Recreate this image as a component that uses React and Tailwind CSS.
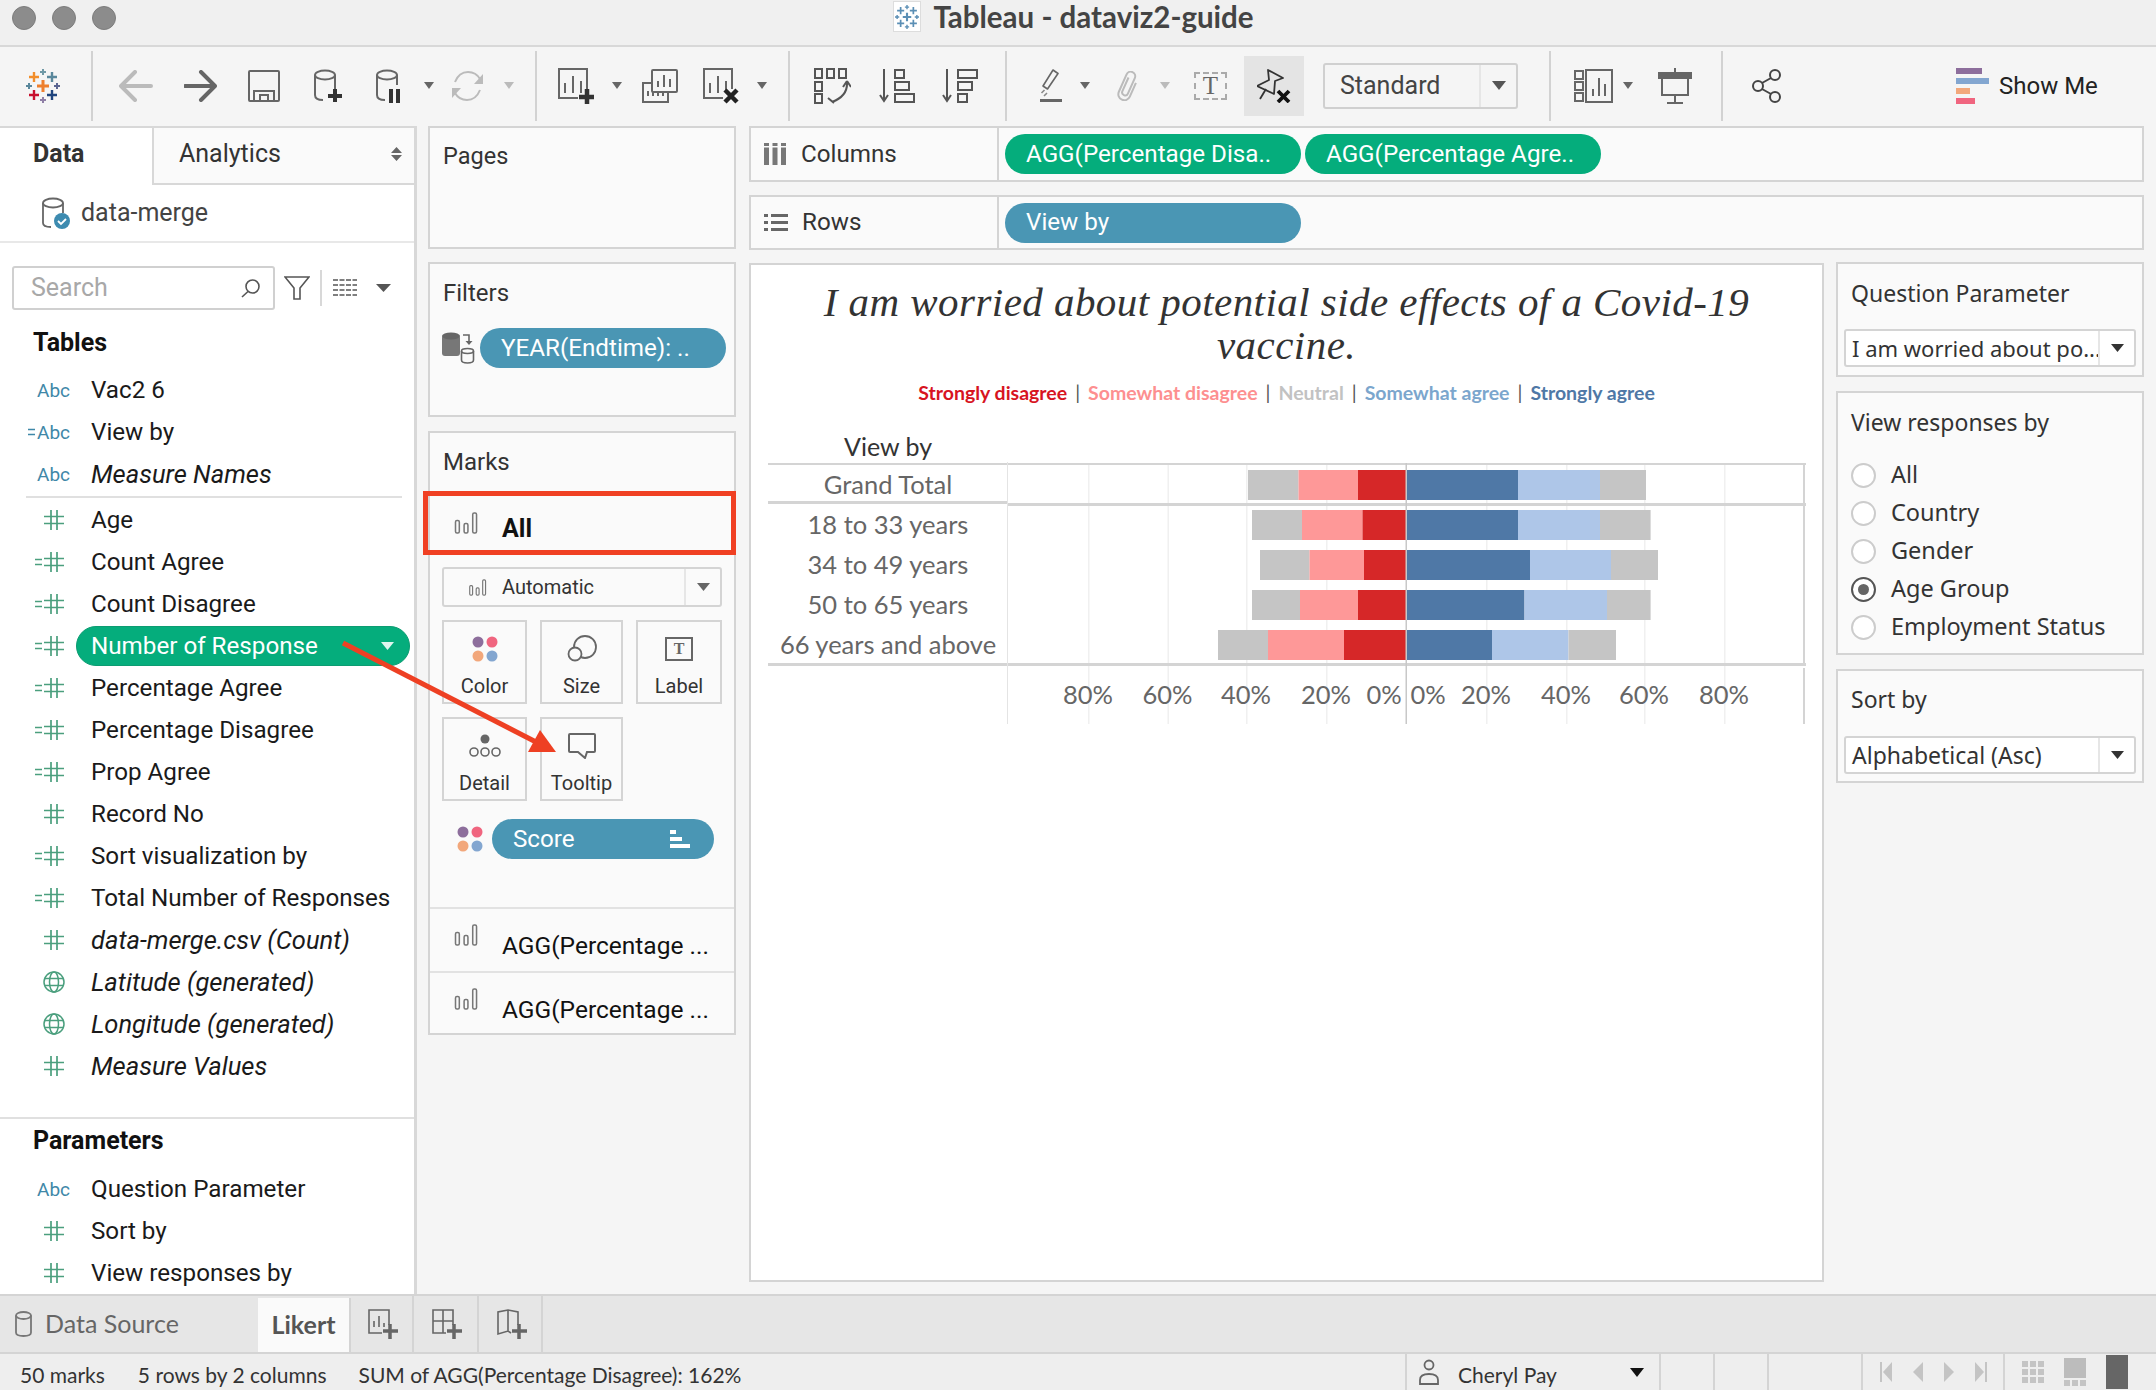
import React from 'react';

const Caret = ({ w = 10, h = 7, color = '#666', className = '' }) => (
  <svg width={w} height={h} viewBox="0 0 10 6" preserveAspectRatio="none" className={className}><path d="M0 0h10L5 6z" fill={color} /></svg>
);

const Sep = ({ ml }) => <div className={`w-[2px] h-[70px] bg-[#d2d2d2] ${ml}`} />;

const TableauMark = ({ size = 34, mono }) => {
  const plus = (x, y, r, c, w = 2.4) => (
    <path key={`${x}-${y}`} d={`M${x - r} ${y}H${x + r}M${x} ${y - r}V${y + r}`} stroke={mono || c} strokeWidth={w} />
  );
  return (
    <svg width={size} height={size} viewBox="0 0 34 34">
      {plus(17, 17, 6, '#ee7f2d', 3)}
      {plus(8, 8, 5, '#f28e2b')}
      {plus(26, 8, 5, '#59879b')}
      {plus(8, 26, 5, '#c8102e')}
      {plus(26, 26, 5, '#1f447d')}
      {plus(17, 3, 3, '#7099a6', 2)}
      {plus(17, 31, 3, '#8f7fa6', 2)}
      {plus(3, 17, 3, '#59879b', 2)}
      {plus(31, 17, 3, '#5b6591', 2)}
    </svg>
  );
};

const BarsOutline = ({ w = 25, h = 22, color = '#777' }) => (
  <svg width={w} height={h} viewBox="0 0 25 23" fill="none" stroke={color} strokeWidth="1.6">
    <rect x="1" y="9" width="4" height="13" rx="1.5" />
    <rect x="10" y="12" width="4" height="10" rx="1.5" />
    <rect x="19" y="1" width="4" height="21" rx="1.5" />
  </svg>
);

const Dots = ({ size = 26 }) => (
  <svg width={size} height={size} viewBox="0 0 26 26">
    <circle cx="6" cy="6" r="5.5" fill="#8d6e9c" />
    <circle cx="20" cy="6" r="5.5" fill="#f0657f" />
    <circle cx="6" cy="20" r="5.5" fill="#f2a77b" />
    <circle cx="20" cy="20" r="5.5" fill="#83a6d0" />
  </svg>
);

const Hash = () => (
  <svg width="20" height="20" viewBox="0 0 20 20" stroke="#4b9f7e" strokeWidth="1.7">
    <path d="M0 6.5h20M0 13.5h20M7 0v20M13 0v20" />
  </svg>
);

const Eq = ({ color = '#4b9f7e' }) => (
  <svg width="8" height="8" viewBox="0 0 8 8" stroke={color} strokeWidth="1.7" className="mr-[1px]">
    <path d="M0 1.5h7M0 6.5h7" />
  </svg>
);

const Globe = () => (
  <svg width="22" height="22" viewBox="0 0 22 22" fill="none" stroke="#4b9f7e" strokeWidth="1.5">
    <circle cx="11" cy="11" r="10" />
    <ellipse cx="11" cy="11" rx="4.5" ry="10" />
    <path d="M1.5 7.5h19M1.5 14.5h19" />
  </svg>
);

const Abc = () => <span className="text-[19px] leading-none not-italic text-[#3f88a8] font-['Roboto',sans-serif]">Abc</span>;

const FieldIcon = ({ type }) => {
  if (type === 'abc') return <div className="w-[91px] flex justify-end items-center pr-[21px] shrink-0"><Abc /></div>;
  if (type === 'eabc') return <div className="w-[91px] flex justify-end items-center pr-[21px] shrink-0"><Eq color="#3f88a8" /><Abc /></div>;
  if (type === 'num') return <div className="w-[91px] flex justify-end items-center pr-[27px] shrink-0"><Hash /></div>;
  if (type === 'calc') return <div className="w-[91px] flex justify-end items-center pr-[27px] shrink-0"><Eq /><Hash /></div>;
  return <div className="w-[91px] flex justify-end items-center pr-[26px] shrink-0"><Globe /></div>;
};

const Field = ({ type, name, italic }) => (
  <div className={`flex items-center h-[42px] text-[#1a1a1a] whitespace-nowrap ${italic ? 'italic text-[25.5px]' : 'text-[24.2px]'}`}>
    <FieldIcon type={type} />
    <span>{name}</span>
  </div>
);

const Pill = ({ color, w, children }) => (
  <div className={`flex items-center h-[40px] rounded-full text-white text-[24.2px] whitespace-nowrap shrink-0 pl-[21px] ${color} ${w}`}>
    <span>{children}</span>
  </div>
);

const Card = ({ h, children, className = '' }) => (
  <div className={`bg-[#fafafa] border-2 border-[#d4d4d4] shrink-0 ${h} ${className}`}>{children}</div>
);

const MarkCard = ({ label, icon }) => (
  <div className="border-2 border-[#d4d4d4] flex flex-col items-center justify-end pb-[1px] text-[20px] text-[#333]">
    <div className="h-[44px] flex items-center justify-center">{icon}</div>
    <span>{label}</span>
  </div>
);

const Select = ({ label, className = '', textClass = 'text-[23px]' }) => (
  <div className={`flex items-center h-[38px] bg-white border-2 border-[#d4d4d4] rounded-[3px] text-[#333] font-['Noto_Sans',sans-serif] ${className}`}>
    <span className={`flex-1 min-w-0 pl-[6px] whitespace-nowrap ${textClass}`}>{label}</span>
    <div className="w-[36px] h-full shrink-0 border-l-2 border-[#e6e6e6] flex items-center justify-center">
      <Caret w={13} h={8} color="#333" />
    </div>
  </div>
);

const Radio = ({ label, on }) => (
  <div className="flex items-center h-[38px] text-[23.5px] text-[#333] font-['Noto_Sans',sans-serif]">
    <div className={`w-[25px] h-[25px] rounded-full bg-white border-2 flex items-center justify-center ${on ? 'border-[#555]' : 'border-[#ccc]'}`}>
      {on && <div className="w-[11px] h-[11px] rounded-full bg-[#666]" />}
    </div>
    <span className="ml-[15px]">{label}</span>
  </div>
);

const tables1 = [
  { type: 'abc', name: 'Vac2 6' },
  { type: 'eabc', name: 'View by' },
  { type: 'abc', name: 'Measure Names', italic: true },
];
const tables2a = [
  { type: 'num', name: 'Age' },
  { type: 'calc', name: 'Count Agree' },
  { type: 'calc', name: 'Count Disagree' },
];
const tables2b = [
  { type: 'calc', name: 'Percentage Agree' },
  { type: 'calc', name: 'Percentage Disagree' },
  { type: 'calc', name: 'Prop Agree' },
  { type: 'num', name: 'Record No' },
  { type: 'calc', name: 'Sort visualization by' },
  { type: 'calc', name: 'Total Number of Responses' },
  { type: 'num', name: 'data-merge.csv (Count)', italic: true },
  { type: 'globe', name: 'Latitude (generated)', italic: true },
  { type: 'globe', name: 'Longitude (generated)', italic: true },
  { type: 'num', name: 'Measure Values', italic: true },
];
const params = [
  { type: 'abc', name: 'Question Parameter' },
  { type: 'num', name: 'Sort by' },
  { type: 'num', name: 'View responses by' },
];

// edges are px from the zero line: neutral, somewhat, strongly | strongly, somewhat, neutral
const rows = [
  { label: 'Grand Total', y: 8, edges: [-158, -107.5, -48, 112, 194, 240] },
  { label: '18 to 33 years', y: 48, edges: [-154, -104, -43.5, 112, 194, 244.6] },
  { label: '34 to 49 years', y: 88, edges: [-146, -96.5, -42, 124, 205, 252] },
  { label: '50 to 65 years', y: 128, edges: [-154, -106, -48, 118.5, 201, 244.6] },
  { label: '66 years and above', y: 168, edges: [-188, -138, -62, 86, 162.5, 210] },
];
const zero = 398;
const ticks = [
  [80, 80], [60, 159.5], [40, 238], [20, 318],
  [20, 478], [40, 558], [60, 636], [80, 716],
];

const Chart = () => (
  <svg width="798" height="262" viewBox="0 0 798 262" className="block shrink-0">
    {ticks.map(([, x]) => <rect key={x} x={x} y="3" width="1.5" height="259" fill="#f0f0f0" />)}
    {rows.map((r) => {
      const [a, b, c, d, e, f] = r.edges;
      return (
        <g key={r.label}>
          <rect x={zero + a} y={r.y} width={b - a} height="30" fill="#c5c5c5" />
          <rect x={zero + b} y={r.y} width={c - b} height="30" fill="#fe9898" />
          <rect x={zero + c} y={r.y} width={-c} height="30" fill="#d62728" />
          <rect x={zero + 1} y={r.y} width={d - 1} height="30" fill="#4f78a6" />
          <rect x={zero + d} y={r.y} width={e - d} height="30" fill="#aec6e8" />
          <rect x={zero + e} y={r.y} width={f - e} height="30" fill="#c5c5c5" />
        </g>
      );
    })}
    <rect x="0" y="1" width="798" height="2" fill="#d4d4d4" />
    <rect x="0" y="41" width="798" height="3" fill="#d4d4d4" />
    <rect x="0" y="201" width="798" height="3" fill="#d4d4d4" />
    <rect x={zero - 0.5} y="1" width="1.5" height="261" fill="#c8c8c8" />
    <rect x="795" y="1" width="2" height="201" fill="#d4d4d4" />
    <rect x="795" y="206" width="2" height="56" fill="#d4d4d4" />
    <g fontFamily="Lato, sans-serif" fontSize="25.5" fill="#666" textAnchor="middle">
      {ticks.map(([v, x]) => <text key={x} x={x} y="242">{v}%</text>)}
      <text x="376" y="242">0%</text>
      <text x="420" y="242">0%</text>
    </g>
  </svg>
);

export default function App() {
  return (
    <div className="relative w-[2156px] h-[1390px] overflow-hidden bg-[#f5f5f5] flex flex-col font-['Roboto',sans-serif] text-[#333]">
      {/* Title bar */}
      <div className="relative h-[47px] shrink-0 bg-[#f0f0f0] border-b-2 border-[#d8d8d8] flex items-center justify-center">
        <div className="absolute left-[12px] top-[6px] flex gap-[16px]">
          <div className="w-[24px] h-[24px] rounded-full bg-[#8c8c8c] border border-[#7d7d7d]" />
          <div className="w-[24px] h-[24px] rounded-full bg-[#8c8c8c] border border-[#7d7d7d]" />
          <div className="w-[24px] h-[24px] rounded-full bg-[#8c8c8c] border border-[#7d7d7d]" />
        </div>
        <div className="flex items-center ml-[-9px] mb-[12px]">
          <div className="w-[28px] h-[31px] bg-white border border-[#ddd] flex items-center justify-center">
            <TableauMark size={24} mono="#5b8fb5" />
          </div>
          <span className="ml-[12px] text-[29.5px] leading-[32px] font-bold text-[#444] font-['Lato',sans-serif]">Tableau - dataviz2-guide</span>
        </div>
      </div>

      {/* Toolbar */}
      <div className="h-[79px] shrink-0 flex items-center pb-[2px]">
        <div className="ml-[26px]"><TableauMark /></div>
        <Sep ml="ml-[31px]" />
        <svg width="34" height="32" viewBox="0 0 34 32" fill="none" stroke="#bbb" strokeWidth="4" strokeLinecap="round" strokeLinejoin="round" className="ml-[26px]"><path d="M32 16H3M16 2L2 16l14 14" /></svg>
        <svg width="33" height="32" viewBox="0 0 33 32" fill="none" stroke="#666" strokeWidth="4" strokeLinecap="round" strokeLinejoin="round" className="ml-[31px]"><path d="M1 16h29M17 2l14 14-14 14" /></svg>
        <svg width="32" height="32" viewBox="0 0 32 32" fill="none" stroke="#666" strokeWidth="2" className="ml-[31px]"><rect x="1" y="1" width="30" height="30" rx="1" /><path d="M6 31V21h20v10M12 31v-6h8v6" /></svg>
        <svg width="28" height="34" viewBox="0 0 28 34" fill="none" className="ml-[34px]"><ellipse cx="11" cy="6" rx="10" ry="4.5" stroke="#666" strokeWidth="2" /><path d="M1 6v20q0 5 8 5M21 6v14" stroke="#666" strokeWidth="2" /><path d="M21 20v13M14 27h14" stroke="#333" strokeWidth="4" /></svg>
        <svg width="24" height="34" viewBox="0 0 24 34" fill="none" className="ml-[34px]"><ellipse cx="11" cy="6" rx="10" ry="4.5" stroke="#666" strokeWidth="2" /><path d="M1 6v20q0 5 8 5M21 6v10" stroke="#666" strokeWidth="2" /><path d="M15 20v14M22 20v14" stroke="#333" strokeWidth="4" /></svg>
        <Caret className="ml-[24px]" />
        <svg width="33" height="32" viewBox="0 0 33 32" fill="none" stroke="#bbb" strokeWidth="2" className="ml-[17px]"><path d="M4 12Q8 2 17 2q8 0 12 7M29 20q-4 10-13 10-8 0-12-7" /><path d="M32 4v10H23zM1 28V18h9z" fill="#bbb" stroke="none" /></svg>
        <Caret color="#bbb" className="ml-[20px]" />
        <Sep ml="ml-[21px]" />
        <svg width="36" height="36" viewBox="0 0 36 36" fill="none" className="ml-[21px]"><path d="M20 30H1V1h28v20" stroke="#666" strokeWidth="2" /><path d="M7 25V15M15 25V8M23 25V13" stroke="#666" strokeWidth="2" /><path d="M29 21v15M21 29h15" stroke="#333" strokeWidth="4.5" /></svg>
        <Caret className="ml-[18px]" />
        <svg width="36" height="34" viewBox="0 0 36 34" fill="none" stroke="#666" strokeWidth="2" className="ml-[20px]"><rect x="10" y="1" width="25" height="22" rx="1" /><path d="M10 14H1v19h25V23" /><path d="M16 18v-6M22 18V6M28 18V10M6 27v-5M11 27v-5M16 27v-5M21 27v-5" /></svg>
        <svg width="36" height="36" viewBox="0 0 36 36" fill="none" className="ml-[25px]"><path d="M20 30H1V1h28v20" stroke="#666" strokeWidth="2" /><path d="M7 25V15M15 25V8M23 25V13" stroke="#666" strokeWidth="2" /><path d="M22 22l12 12M34 22L22 34" stroke="#222" strokeWidth="4.5" /></svg>
        <Caret className="ml-[18px]" />
        <Sep ml="ml-[21px]" />
        <svg width="37" height="36" viewBox="0 0 37 36" fill="none" stroke="#555" strokeWidth="2" className="ml-[24px]"><rect x="1" y="1" width="7" height="9" /><rect x="13" y="1" width="7" height="9" /><rect x="25" y="1" width="7" height="9" /><rect x="1" y="14" width="7" height="9" /><rect x="1" y="26" width="7" height="9" /><path d="M33 14q1 14-15 20M33 13l-4 6M33 13l4 6M14 30l6 5" /></svg>
        <svg width="36" height="34" viewBox="0 0 36 34" fill="none" stroke="#555" strokeWidth="2" className="ml-[28px]"><path d="M5 0v30M1 26l4 6 4-6" /><rect x="16" y="1" width="9" height="8" /><rect x="16" y="13" width="14" height="8" /><rect x="16" y="25" width="19" height="8" /></svg>
        <svg width="36" height="34" viewBox="0 0 36 34" fill="none" stroke="#555" strokeWidth="2" className="ml-[27px]"><path d="M5 0v30M1 26l4 6 4-6" /><rect x="16" y="1" width="19" height="8" /><rect x="16" y="13" width="14" height="8" /><rect x="16" y="25" width="9" height="8" /></svg>
        <Sep ml="ml-[27px]" />
        <svg width="22" height="34" viewBox="0 0 22 34" fill="none" className="ml-[33px]"><path d="M13 1l5 3.5L7.5 20 3 17z" stroke="#666" strokeWidth="1.6" strokeLinejoin="round" /><path d="M1.5 24l3-3M4 27l3-3" stroke="#888" strokeWidth="1.6" /><rect x="0" y="30" width="22" height="3" fill="#666" /></svg>
        <Caret className="ml-[18px]" />
        <svg width="24" height="30" viewBox="0 0 24 30" fill="none" stroke="#bbb" strokeWidth="2" className="ml-[26px]"><g transform="rotate(24 12 15)"><path d="M9 7v15a3 3 0 0 0 6 0V5a4.5 4.5 0 0 0-9 0v19a6 6 0 0 0 12 0V9" /></g></svg>
        <Caret color="#bbb" className="ml-[20px]" />
        <div className="ml-[24px] w-[33px] h-[28px] border-2 border-dashed border-[#aaa] flex items-center justify-center font-['Liberation_Serif',serif] text-[25px] leading-none text-[#666]">T</div>
        <div className="ml-[17px] w-[60px] h-[60px] bg-[#e4e4e4] flex items-center justify-center">
          <svg width="34" height="34" viewBox="0 0 34 34" fill="none"><path d="M11 1l15 8-8 3-1 13L0 17l12-6z" stroke="#333" strokeWidth="1.8" strokeLinejoin="round" /><path d="M9 20L3 30" stroke="#333" strokeWidth="1.8" /><path d="M21 22l11 11M32 22L21 33" stroke="#111" strokeWidth="3.8" /></svg>
        </div>
        <div className="ml-[19px] w-[195px] h-[46px] border-2 border-[#d0d0d0] rounded-[3px] flex items-center text-[25px] text-[#444]">
          <span className="flex-1 pl-[15px]">Standard</span>
          <div className="w-[37px] h-full border-l-2 border-[#e6e6e6] flex items-center justify-center"><Caret w={14} h={9} color="#555" /></div>
        </div>
        <Sep ml="ml-[31px]" />
        <svg width="39" height="34" viewBox="0 0 39 34" fill="none" stroke="#666" strokeWidth="2" className="ml-[23px]"><rect x="1" y="2" width="8" height="8" /><rect x="1" y="13" width="8" height="8" /><rect x="1" y="24" width="8" height="8" /><rect x="12" y="1" width="26" height="32" /><path d="M19 27v-7M25 27V9M31 27V15" /></svg>
        <Caret className="ml-[10px]" />
        <svg width="34" height="36" viewBox="0 0 34 36" fill="none" stroke="#666" strokeWidth="2" className="ml-[25px]"><path d="M17 0v5" /><rect x="0" y="4" width="34" height="7" fill="#666" stroke="none" /><path d="M4 10v17h26V10M17 27v8M9 35h16" /></svg>
        <Sep ml="ml-[29px]" />
        <svg width="29" height="34" viewBox="0 0 29 34" fill="none" stroke="#444" strokeWidth="2" className="ml-[29px]"><circle cx="6" cy="17" r="5" /><circle cx="23" cy="6" r="5" /><circle cx="23" cy="28" r="5" /><path d="M10 14l9-5M10 20l9 5" /></svg>
        <div className="ml-[175px] w-[33px] flex flex-col gap-[4px]">
          <div className="h-[6px] w-[26px] bg-[#8d6e9c]" />
          <div className="h-[6px] w-[33px] bg-[#83a6d0]" />
          <div className="h-[6px] w-[14px] bg-[#f2a77b]" />
          <div className="h-[6px] w-[19px] bg-[#f0657f]" />
        </div>
        <span className="ml-[10px] text-[24px] text-[#222] whitespace-nowrap">Show Me</span>
      </div>

      {/* Main */}
      <div className="flex h-[1168px] shrink-0">
        {/* Data pane */}
        <div className="w-[417px] shrink-0 bg-white border-t-2 border-r-[3px] border-[#d8d8d8] flex flex-col overflow-hidden">
          <div className="flex h-[57px] shrink-0">
            <div className="w-[152px] pl-[33px] pb-[5px] flex items-center text-[25px] font-bold text-[#333]">Data</div>
            <div className="flex-1 bg-[#fafafa] border-l-2 border-b-2 border-[#d8d8d8] pl-[25px] pr-[12px] pb-[3px] flex items-center justify-between text-[25px] text-[#333]">
              <span>Analytics</span>
              <svg width="11" height="14" viewBox="0 0 11 14" fill="#666"><path d="M0 6l5.5-6L11 6zM0 8l5.5 6L11 8z" /></svg>
            </div>
          </div>
          <div className="h-[58px] shrink-0 border-b-2 border-[#e8e8e8] flex items-center pl-[41px] text-[25px] text-[#444]">
            <svg width="29" height="32" viewBox="0 0 29 32" fill="none">
              <ellipse cx="12" cy="6" rx="10" ry="4.5" stroke="#666" strokeWidth="1.8" />
              <path d="M2 6v20q0 4 8 4M22 6v10" stroke="#666" strokeWidth="1.8" />
              <circle cx="21" cy="24" r="8" fill="#3d8bb0" />
              <path d="M17 24l3 3 5-5" stroke="#fff" strokeWidth="1.8" />
            </svg>
            <span className="ml-[11px]">data-merge</span>
          </div>
          <div className="flex items-center mt-[23px] h-[44px] shrink-0 pl-[12px]">
            <div className="w-[263px] h-full border-2 border-[#d0d0d0] rounded-[3px] flex items-center justify-between pl-[17px] pr-[13px] text-[25px] text-[#a8a8a8]">
              <span>Search</span>
              <svg width="19" height="19" viewBox="0 0 19 19" fill="none" stroke="#555" strokeWidth="1.6"><circle cx="11.5" cy="7.5" r="6.5" /><path d="M7 12.5L1 18" /></svg>
            </div>
            <svg width="26" height="24" viewBox="0 0 26 24" fill="none" stroke="#555" strokeWidth="1.6" className="ml-[9px]"><path d="M1 1h24l-9 11v11h-6V12z" /></svg>
            <div className="w-[2px] h-[36px] bg-[#d8d8d8] ml-[10px]" />
            <svg width="24" height="18" viewBox="0 0 24 18" stroke="#555" strokeWidth="1.6" strokeDasharray="5 1.5" className="ml-[11px]"><path d="M0 1h24M0 6h24M0 11h24M0 16h24" /></svg>
            <Caret w={15} h={8} color="#555" className="ml-[19px]" />
          </div>
          <div className="h-[42px] mt-[12px] mb-[5px] shrink-0 pl-[33px] flex items-center text-[25px] font-bold text-[#111]">Tables</div>
          {tables1.map((f) => <Field key={f.name} {...f} />)}
          <div className="h-[2px] bg-[#e0e0e0] ml-[26px] mr-[12px] mt-[1px] mb-[1px] shrink-0" />
          {tables2a.map((f) => <Field key={f.name} {...f} />)}
          <div className="flex items-center h-[42px] shrink-0">
            <div className="w-[76px] flex justify-end items-center pr-[12px] shrink-0"><Eq /><Hash /></div>
            <div className="w-[334px] h-[40px] rounded-full bg-[#05ad7c] border border-[#0c9c72] flex items-center justify-between pl-[14px] pr-[15px] text-[24.2px] text-white shrink-0">
              <span>Number of Response</span>
              <Caret w={13} h={8} color="#dff5ee" />
            </div>
          </div>
          {tables2b.map((f) => <Field key={f.name} {...f} />)}
          <div className="h-[2px] bg-[#e0e0e0] mt-[30px] mb-[1px] shrink-0" />
          <div className="h-[42px] mb-[6px] shrink-0 pl-[33px] flex items-center text-[25px] font-bold text-[#111]">Parameters</div>
          {params.map((f) => <Field key={f.name} {...f} />)}
        </div>

        {/* Cards column */}
        <div className="w-[308px] ml-[11px] shrink-0 flex flex-col">
          <Card h="h-[123px]"><div className="pl-[13px] pt-[11px] text-[23.5px] text-[#333]">Pages</div></Card>
          <Card h="h-[155px] mt-[13px]">
            <div className="pl-[13px] pt-[11px] text-[24px] text-[#333]">Filters</div>
            <div className="flex items-center mt-[17px] pl-[12px]">
              <svg width="33" height="32" viewBox="0 0 33 32" fill="none" className="shrink-0">
                <rect x="0" y="3" width="18" height="21" rx="3" fill="#777" />
                <ellipse cx="9" cy="4" rx="9" ry="3.5" fill="#666" />
                <ellipse cx="25.5" cy="19" rx="6" ry="2.5" stroke="#666" strokeWidth="1.6" />
                <path d="M19.5 19v9q0 3 6 3t6-3v-9" stroke="#666" strokeWidth="1.6" />
                <path d="M21 3h6v7" stroke="#666" strokeWidth="1.6" />
                <path d="M23.5 9h7l-3.5 4z" fill="#666" />
              </svg>
              <Pill color="bg-[#4a96b4]" w="w-[246px] ml-[5px]">YEAR(Endtime): ..</Pill>
            </div>
          </Card>
          <Card h="h-[604px] mt-[14px]" className="flex flex-col">
            <div className="h-[58px] shrink-0 pl-[13px] flex items-center text-[24px] text-[#333]">Marks</div>
            <div className="h-[64px] shrink-0 -ml-[7px] -mr-[2px] border-[5px] border-[#f04023] flex items-center pl-[26px] relative">
              <BarsOutline />
              <span className="ml-[23px] text-[25px] font-bold text-[#111] mt-[11px]">All</span>
            </div>
            <div className="mx-[12px] mt-[12px] h-[40px] shrink-0 border-2 border-[#d4d4d4] rounded-[3px] flex items-center text-[20px] text-[#333]">
              <div className="ml-[25px]"><BarsOutline w={18} h={17} /></div>
              <span className="ml-[15px] flex-1">Automatic</span>
              <div className="w-[36px] h-full border-l-2 border-[#e6e6e6] flex items-center justify-center"><Caret w={13} h={8} color="#666" /></div>
            </div>
            <div className="mx-[12px] mt-[13px] grid grid-cols-[85px_83px_86px] gap-x-[13px] gap-y-[13px] shrink-0 auto-rows-[84px]">
              <MarkCard label="Color" icon={<Dots />} />
              <MarkCard label="Size" icon={
                <svg width="30" height="28" viewBox="0 0 30 28" fill="none" stroke="#666" strokeWidth="1.8"><circle cx="18" cy="12" r="11" /><circle cx="8" cy="19" r="6.5" fill="#fafafa" /></svg>
              } />
              <MarkCard label="Label" icon={
                <div className="w-[28px] h-[24px] border-2 border-[#666] flex items-center justify-center font-['Liberation_Serif',serif] text-[16px] font-bold text-[#666] leading-none">T</div>
              } />
              <MarkCard label="Detail" icon={
                <svg width="32" height="24" viewBox="0 0 32 24" fill="none" stroke="#666" strokeWidth="1.6"><circle cx="16" cy="5" r="4.5" fill="#666" stroke="none" /><circle cx="5" cy="18" r="4" /><circle cx="16" cy="18" r="4" /><circle cx="27" cy="18" r="4" /></svg>
              } />
              <MarkCard label="Tooltip" icon={
                <svg width="28" height="26" viewBox="0 0 28 26" fill="none" stroke="#666" strokeWidth="2"><path d="M2 1h24q1 0 1 1v16q0 1-1 1h-7l-2 6-7-6H2q-1 0-1-1V2q0-1 1-1z" /></svg>
              } />
            </div>
            <div className="flex items-center mt-[18px] pl-[27px] shrink-0">
              <Dots />
              <div className="w-[222px] h-[40px] ml-[9px] rounded-full bg-[#4a96b4] text-white text-[24.2px] flex items-center justify-between pl-[21px] pr-[24px]">
                <span>Score</span>
                <div className="flex flex-col gap-[3px]">
                  <div className="w-[6px] h-[4px] bg-white" />
                  <div className="w-[12px] h-[4px] bg-white" />
                  <div className="w-[20px] h-[4px] bg-white" />
                </div>
              </div>
            </div>
            <div className="mt-[48px] h-[64px] shrink-0 border-t-2 border-[#e2e2e2] flex items-center pl-[24px] text-[24.5px] text-[#111]">
              <div className="-mt-[10px]"><BarsOutline /></div>
              <span className="ml-[23px] mt-[12px] whitespace-nowrap">AGG(Percentage ...</span>
            </div>
            <div className="h-[64px] shrink-0 border-t-2 border-[#e2e2e2] flex items-center pl-[24px] text-[24.5px] text-[#111]">
              <div className="-mt-[10px]"><BarsOutline /></div>
              <span className="ml-[23px] mt-[12px] whitespace-nowrap">AGG(Percentage ...</span>
            </div>
          </Card>
        </div>

        {/* Shelves and view */}
        <div className="w-[1395px] ml-[13px] shrink-0 flex flex-col">
          <Card h="h-[56px]" className="flex items-center">
            <div className="w-[248px] h-full shrink-0 border-r-2 border-[#d4d4d4] flex items-center pl-[13px] text-[24.2px] text-[#333]">
              <svg width="22" height="22" viewBox="0 0 22 22" fill="#777"><rect x="0" y="0" width="5" height="22" /><rect x="8.5" y="0" width="5" height="22" /><rect x="17" y="0" width="5" height="22" /><rect x="0" y="3" width="22" height="1.5" fill="#fafafa" /></svg>
              <span className="ml-[15px]">Columns</span>
            </div>
            <div className="flex ml-[6px] gap-[4px]">
              <Pill color="bg-[#05ad7c]" w="w-[296px]">AGG(Percentage Disa..</Pill>
              <Pill color="bg-[#05ad7c]" w="w-[296px]">AGG(Percentage Agre..</Pill>
            </div>
          </Card>
          <Card h="h-[55px] mt-[13px]" className="flex items-center">
            <div className="w-[248px] h-full shrink-0 border-r-2 border-[#d4d4d4] flex items-center pl-[13px] text-[24.2px] text-[#333]">
              <svg width="24" height="20" viewBox="0 0 24 20" fill="#666"><rect x="0" y="1" width="4" height="3" /><rect x="7" y="1" width="17" height="3" /><rect x="0" y="8" width="4" height="3" /><rect x="7" y="8" width="17" height="3" /><rect x="0" y="15" width="4" height="3" /><rect x="7" y="15" width="17" height="3" /></svg>
              <span className="ml-[14px]">Rows</span>
            </div>
            <div className="ml-[6px]"><Pill color="bg-[#4a96b4]" w="w-[296px]">View by</Pill></div>
          </Card>

          <div className="flex mt-[13px] h-[1019px] shrink-0">
            {/* Worksheet */}
            <div className="w-[1075px] h-full shrink-0 bg-white border-2 border-[#d4d4d4] flex flex-col">
              <div className="mt-[16px] text-center font-['Liberation_Serif',serif] italic text-[41px] leading-[43px] tracking-[0.45px] text-[#333] px-[40px]">
                I am worried about potential side effects of a Covid-19 vaccine.
              </div>
              <div className="mt-[14px] h-[24px] flex items-center justify-center text-[19.5px] font-['Lato',sans-serif] font-bold whitespace-nowrap">
                <span className="text-[#d7141f]">Strongly disagree</span>
                <span className="font-normal text-[#555] mx-[8px]">|</span>
                <span className="text-[#fd8f90]">Somewhat disagree</span>
                <span className="font-normal text-[#555] mx-[8px]">|</span>
                <span className="text-[#c2c2c2]">Neutral</span>
                <span className="font-normal text-[#555] mx-[8px]">|</span>
                <span className="text-[#7ba6cd]">Somewhat agree</span>
                <span className="font-normal text-[#555] mx-[8px]">|</span>
                <span className="text-[#4f78a6]">Strongly agree</span>
              </div>
              <div className="mt-[27px] pl-[17px] flex">
                <div className="w-[240px] shrink-0">
                  <div className="h-[30px] flex items-center justify-center text-[25px] text-[#333] font-['Lato',sans-serif]">View by</div>
                  <div className="h-[2px] mt-[1px] bg-[#d4d4d4]" />
                  <div className="h-[39px] pt-[2px] border-b-[3px] border-[#d4d4d4] flex items-center justify-center text-[25.5px] text-[#666] font-['Lato',sans-serif]">Grand Total</div>
                  {rows.slice(1).map((r) => (
                    <div key={r.label} className="h-[40px] pt-[1px] flex items-center justify-center text-[25.5px] text-[#666] font-['Lato',sans-serif] whitespace-nowrap">{r.label}</div>
                  ))}
                  <div className="h-[3px] bg-[#d4d4d4] -mt-[1px]" />
                </div>
                <div className="mt-[30px] -ml-[1px] border-l border-[#e4e4e4]"><Chart /></div>
              </div>
            </div>

            {/* Side controls */}
            <div className="w-[308px] ml-[12px] shrink-0 flex flex-col">
              <Card h="h-[115px] -mt-[1px]">
                <div className="pl-[13px] pt-[13px] text-[23px] leading-[32px] font-['Noto_Sans',sans-serif]">Question Parameter</div>
                <Select label="I am worried about po..." textClass="text-[22px]" className="mx-[6px] mt-[20px]" />
              </Card>
              <Card h="h-[264px] mt-[14px]">
                <div className="pl-[13px] pt-[13px] text-[23px] leading-[32px] font-['Noto_Sans',sans-serif]">View responses by</div>
                <div className="pl-[13px] mt-[18px]">
                  <Radio label="All" />
                  <Radio label="Country" />
                  <Radio label="Gender" />
                  <Radio label="Age Group" on />
                  <Radio label="Employment Status" />
                </div>
              </Card>
              <Card h="h-[114px] mt-[14px]">
                <div className="pl-[13px] pt-[12px] text-[23px] leading-[32px] font-['Noto_Sans',sans-serif]">Sort by</div>
                <Select label="Alphabetical (Asc)" className="mx-[6px] mt-[21px]" />
              </Card>
            </div>
          </div>
        </div>
      </div>

      {/* Sheet tabs */}
      <div className="h-[60px] shrink-0 bg-[#e6e6e6] border-t-2 border-b-2 border-[#d4d4d4] flex items-stretch">
        <div className="w-[258px] flex items-center pl-[15px] text-[25px] text-[#666] font-['Lato',sans-serif]">
          <svg width="17" height="26" viewBox="0 0 17 26" fill="none" stroke="#777" strokeWidth="1.8"><ellipse cx="8.5" cy="4.5" rx="7.5" ry="3.5" /><path d="M1 4.5v17q0 3.5 7.5 3.5t7.5-3.5v-17" /></svg>
          <span className="ml-[13px]">Data Source</span>
        </div>
        <div className="w-[93px] bg-[#fafafa] mt-[2px] border-r-2 border-[#d4d4d4] flex items-center justify-center text-[25px] font-bold text-[#555] font-['Lato',sans-serif]">Likert</div>
        <div className="w-[63px] pl-[3px] border-r-2 border-[#d4d4d4] flex items-center justify-center">
          <svg width="30" height="30" viewBox="0 0 30 30" fill="none" stroke="#666" strokeWidth="1.6"><path d="M14 24H1V1h20v15" /><path d="M6 18v-6M11 18V7M16 18v-4" /><path d="M22 15v15M15 22h15" strokeWidth="3.5" /></svg>
        </div>
        <div className="w-[65px] pl-[3px] border-r-2 border-[#d4d4d4] flex items-center justify-center">
          <svg width="30" height="30" viewBox="0 0 30 30" fill="none" stroke="#666" strokeWidth="1.6"><path d="M14 24H1V1h20v15M1 12h20M11 1v23" /><path d="M22 15v15M15 22h15" strokeWidth="3.5" /></svg>
        </div>
        <div className="w-[64px] pl-[3px] border-r-2 border-[#d4d4d4] flex items-center justify-center">
          <svg width="30" height="30" viewBox="0 0 30 30" fill="none" stroke="#666" strokeWidth="1.6"><path d="M14 24L11 22 1 25V3l10-2 10 2v13M11 1v21" /><path d="M22 15v15M15 22h15" strokeWidth="3.5" /></svg>
        </div>
      </div>

      {/* Status bar */}
      <div className="flex-1 bg-[#eeeeee] flex items-center text-[21px] text-[#333] font-['Lato',sans-serif] whitespace-nowrap">
        <span className="ml-[20px] pt-[5px]">50 marks</span>
        <span className="ml-[33px] pt-[5px]">5 rows by 2 columns</span>
        <span className="ml-[32px] pt-[5px]">SUM of AGG(Percentage Disagree): 162%</span>
        <div className="ml-auto flex items-stretch h-full">
          <div className="w-[254px] border-l-2 border-[#d4d4d4] flex items-center pl-[12px]">
            <svg width="20" height="26" viewBox="0 0 20 26" fill="none" stroke="#666" strokeWidth="1.8"><circle cx="10" cy="6" r="4.5" /><path d="M1 25v-4q0-6 9-6t9 6v4z" /></svg>
            <span className="ml-[19px] flex-1 pt-[5px]">Cheryl Pay</span>
            <Caret w={14} h={9} color="#111" className="mr-[15px]" />
          </div>
          <div className="w-[54px] border-l-2 border-[#d4d4d4]" />
          <div className="w-[54px] border-l-2 border-[#d4d4d4]" />
          <div className="w-[94px] border-l-2 border-[#d4d4d4]" />
          <div className="w-[142px] border-l-2 border-[#d4d4d4] flex items-center pl-[17px] gap-[21px]">
            <svg width="12" height="20" viewBox="0 0 12 20" fill="#c4c4c4"><rect width="2" height="20" /><path d="M12 0v20L3 10z" /></svg>
            <svg width="10" height="20" viewBox="0 0 10 20" fill="#c4c4c4"><path d="M10 0v20L0 10z" /></svg>
            <svg width="10" height="20" viewBox="0 0 10 20" fill="#c4c4c4"><path d="M0 0v20l10-10z" /></svg>
            <svg width="12" height="20" viewBox="0 0 12 20" fill="#c4c4c4"><rect x="10" width="2" height="20" /><path d="M0 0v20l9-10z" /></svg>
          </div>
          <div className="w-[153px] border-l-2 border-[#d4d4d4] flex items-center pl-[17px] gap-[20px]">
            <div className="grid grid-cols-3 gap-[2px]">
              {[0, 1, 2, 3, 4, 5, 6, 7, 8].map((i) => <div key={i} className="w-[6px] h-[6px] bg-[#c4c4c4]" />)}
            </div>
            <div className="flex flex-col gap-[2px]">
              <div className="w-[22px] h-[20px] bg-[#bcbcbc]" />
              <div className="flex gap-[2px]"><div className="w-[6px] h-[6px] bg-[#c4c4c4]" /><div className="w-[6px] h-[6px] bg-[#c4c4c4]" /><div className="w-[6px] h-[6px] bg-[#c4c4c4]" /></div>
            </div>
            <div className="w-[22px] h-[34px] bg-[#666]" />
          </div>
        </div>
      </div>

      {/* Red annotation arrow */}
      <svg width="220" height="116" viewBox="0 0 220 116" className="absolute left-[340px] top-[640px] pointer-events-none">
        <path d="M3 3L196 102" stroke="#ee4023" strokeWidth="5" />
        <path d="M216 112H188L200 90z" fill="#ee4023" />
      </svg>
    </div>
  );
}
